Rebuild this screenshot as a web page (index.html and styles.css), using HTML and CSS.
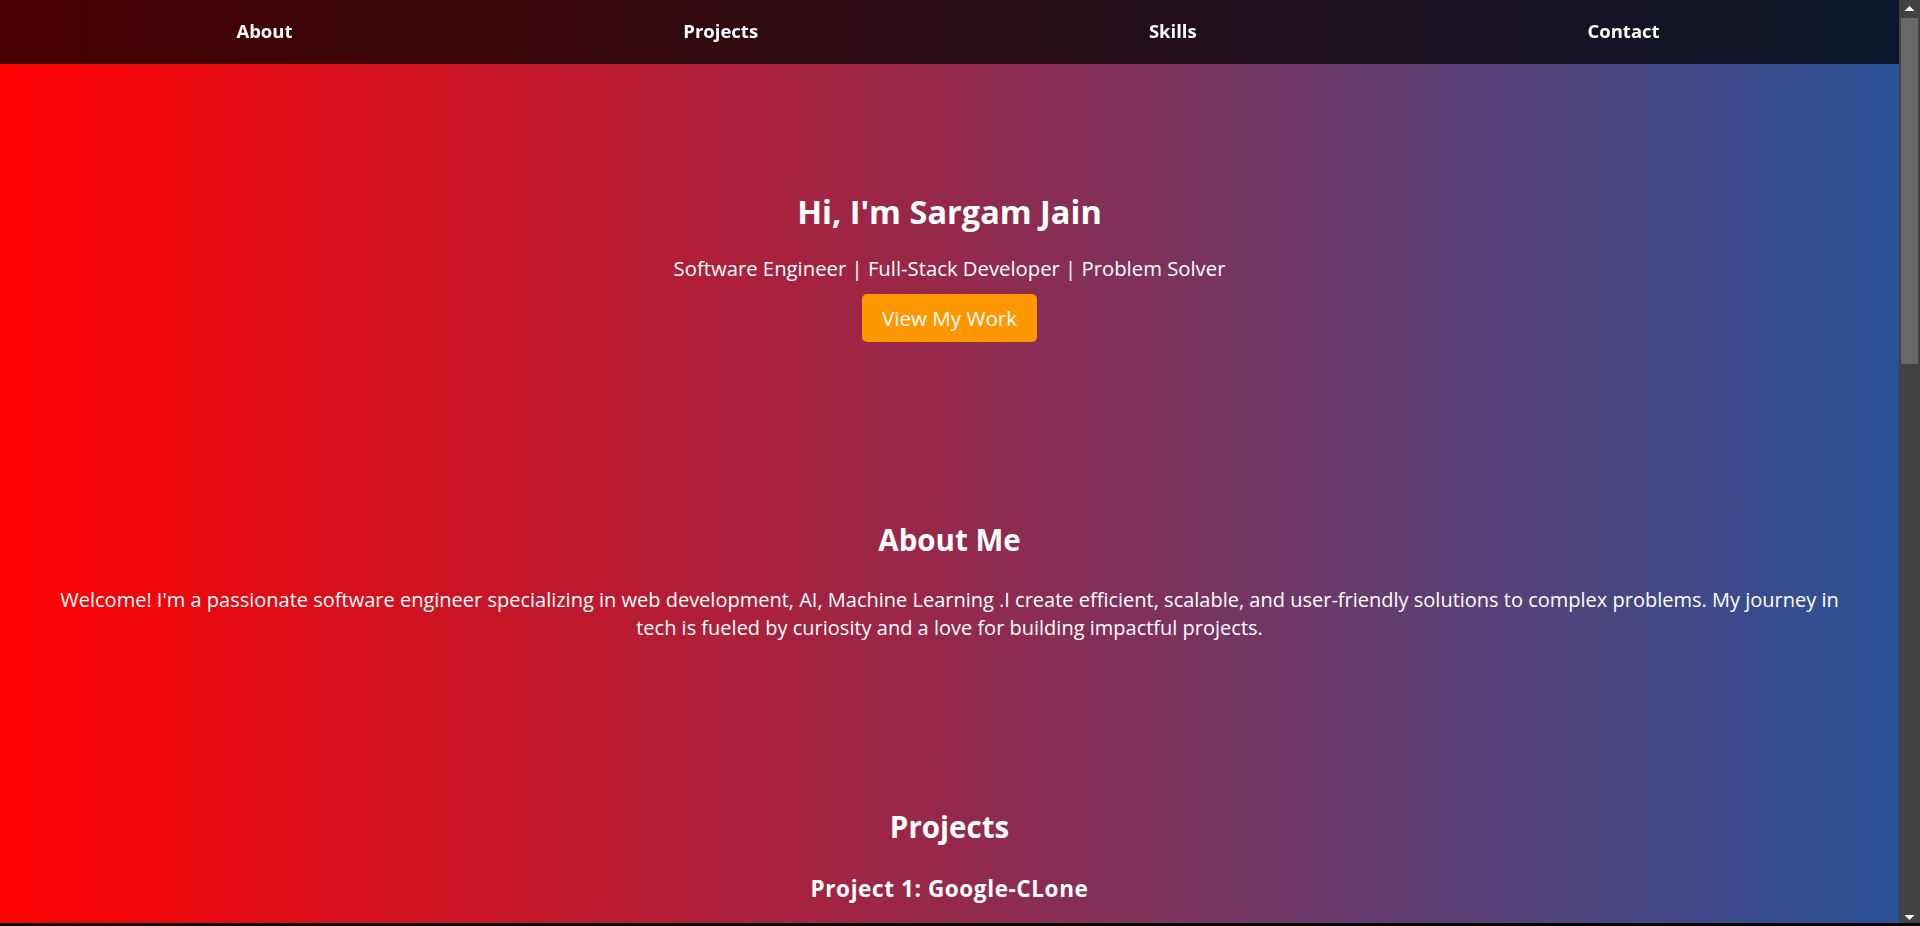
FILE: index.html
```html
<!DOCTYPE html>
<html lang="en">
<head>
<meta charset="utf-8">
<title>Sargam Jain | Portfolio</title>
<link rel="stylesheet" href="styles.css">
</head>
<body>
<nav class="topbar">
  <ul class="nav-list">
    <li><a href="#about">About</a></li>
    <li><a href="#projects">Projects</a></li>
    <li><a href="#skills">Skills</a></li>
    <li><a href="#contact">Contact</a></li>
  </ul>
</nav>
<main class="page">
  <section class="hero">
    <h1 class="hero-title">Hi, I'm Sargam Jain</h1>
    <p class="hero-sub">Software Engineer | Full-Stack Developer | Problem Solver</p>
    <a class="btn" href="#projects">View My Work</a>
  </section>

  <section class="section about" id="about">
    <h2 class="section-title">About Me</h2>
    <p class="about-text">Welcome! I'm a passionate software engineer specializing in web development, AI, Machine Learning .I create efficient, scalable, and user-friendly solutions to complex problems. My journey in tech is fueled by curiosity and a love for building impactful projects.</p>
  </section>

  <section class="section projects" id="projects">
    <h2 class="section-title">Projects</h2>
    <div class="project">
      <h3 class="project-title">Project 1: Google-CLone</h3>
      <p class="project-text">A clone of the Google search home page built with HTML and CSS.</p>
    </div>
    <div class="project">
      <h3 class="project-title">Project 2: Weather App</h3>
      <p class="project-text">A weather application that shows live forecasts for any city.</p>
    </div>
  </section>

  <section class="section skills" id="skills">
    <h2 class="section-title">Skills</h2>
    <ul class="skill-list">
      <li>HTML</li>
      <li>CSS</li>
      <li>JavaScript</li>
      <li>Python</li>
      <li>Machine Learning</li>
    </ul>
  </section>

  <section class="section contact" id="contact">
    <h2 class="section-title">Contact</h2>
    <p class="project-text">Email: sargamjain@example.com</p>
  </section>
</main>

<aside class="fake-scrollbar" aria-hidden="true">
  <svg class="sb-arrow" width="21" height="17" viewBox="0 0 21 17"><path d="M5.5 11 L10.5 6 L15.5 11 Z" fill="#ffffff"/></svg>
  <div class="sb-track">
    <div class="sb-thumb"></div>
  </div>
  <svg class="sb-arrow" width="21" height="17" viewBox="0 0 21 17"><path d="M5.5 6 L10.5 11 L15.5 6 Z" fill="#ffffff"/></svg>
</aside>
<div class="window-edge" aria-hidden="true"></div>
</body>
</html>
```

FILE: styles.css
```css
html {
  background: #424242;
}

body {
  margin: 0 21px 0 0;
  font-family: "Open Sans", "DejaVu Sans", sans-serif;
  color: #ffffff;
  background: linear-gradient(to right, #ff0000, #2a5298);
  text-align: center;
}

.topbar {
  position: fixed;
  top: 0;
  left: 0;
  right: 21px;
  height: 64px;
  background: rgba(0, 0, 0, 0.72);
  z-index: 10;
}

.nav-list {
  list-style: none;
  margin: 0;
  padding: 0 44px 3px 41px;
  height: 64px;
  box-sizing: border-box;
  display: flex;
  justify-content: space-around;
  align-items: center;
}

.nav-list a {
  color: #ffffff;
  text-decoration: none;
  font-weight: 700;
  font-size: 18.5px;
}

.page {
  padding-top: 63px;
}

.hero {
  padding: 126px 20px 89px;
  display: flex;
  flex-direction: column;
  align-items: center;
}

.hero-title {
  margin: 0;
  font-size: 32.5px;
  line-height: 46px;
  font-weight: 700;
}

.hero-sub {
  margin: 20px 0 12px;
  font-size: 20.3px;
  line-height: 27px;
}

.btn {
  display: inline-block;
  background: #ff9800;
  color: #ffffff;
  text-decoration: none;
  font-size: 20.6px;
  line-height: 28px;
  padding: 10px 20px;
  border-radius: 5px;
}

.section {
  padding: 89px 50px 76px;
}

.section-title {
  margin: 0;
  font-size: 29.5px;
  line-height: 40px;
  font-weight: 700;
}

.about-text {
  margin: 26px 0 0;
  font-size: 20px;
  line-height: 28px;
}

.project {
  margin-top: 26px;
  padding-bottom: 120px;
}

.project-title {
  margin: 0;
  font-size: 22.5px;
  line-height: 31px;
  font-weight: 700;
  letter-spacing: 0.6px;
}

.project-text {
  margin: 22px 0 0;
  font-size: 20px;
  line-height: 28px;
}

.skill-list {
  list-style: none;
  margin: 26px 0 0;
  padding: 0;
  display: flex;
  flex-direction: column;
  gap: 16px;
  font-size: 20px;
}

.contact {
  padding-bottom: 200px;
}

.fake-scrollbar {
  position: fixed;
  top: 0;
  right: 0;
  width: 21px;
  height: 100vh;
  background: #424242;
  display: flex;
  flex-direction: column;
  z-index: 20;
}

.sb-arrow {
  display: block;
  flex: none;
}

.sb-track {
  flex: 1;
  padding: 1px 2px 0;
}

.sb-thumb {
  height: 346px;
  background: #686868;
}

.window-edge {
  position: fixed;
  left: 0;
  right: 0;
  bottom: 0;
  height: 3px;
  background: #000000;
  z-index: 30;
}
```
